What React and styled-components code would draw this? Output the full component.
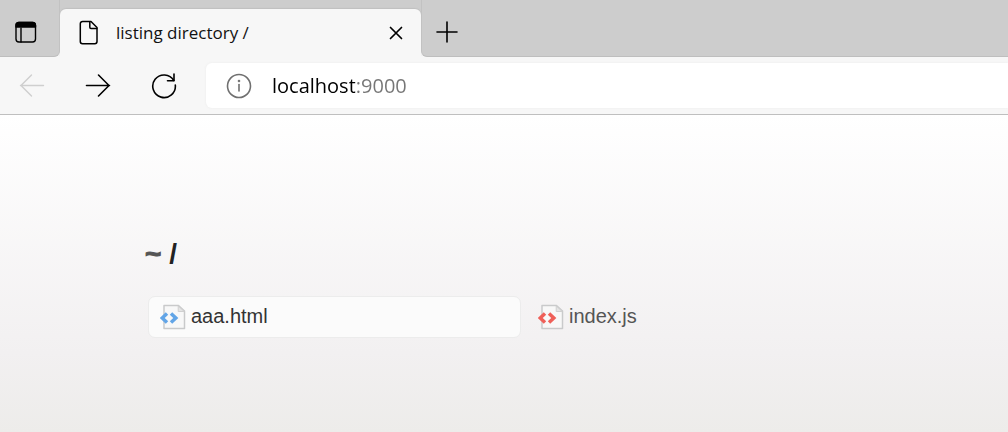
import React from "react";
import styled, { createGlobalStyle } from "styled-components";

const GlobalStyle = createGlobalStyle`
  * { box-sizing: border-box; }
  html, body, #root { height: 100%; }
  body { margin: 0; background: #f7f7f7; }
`;

const Window = styled.div`
  display: flex;
  flex-direction: column;
  min-height: 100%;
  overflow: hidden;
  font-family: "Segoe UI", "Open Sans", "Noto Sans", sans-serif;
`;

const TabStrip = styled.header`
  display: flex;
  height: 57px;
  background: #f7f7f7;
`;

const StripEnd = styled.div`
  display: flex;
  align-items: center;
  background: #cdcdcd;
  border-bottom: 1px solid #bebebe;
`;

const StripStart = styled(StripEnd)`
  width: 60px;
  padding: 8px 0 0 10px;
  border-right: 1px solid #c2c2c2;
  border-radius: 0 0 6px 0;
`;

const StripRest = styled(StripEnd)`
  flex: 1;
  padding: 7px 0 0 9px;
  border-left: 1px solid #c2c2c2;
  border-radius: 0 0 0 6px;
`;

const TabSlot = styled.div`
  flex: 0 1 361px;
  padding-top: 9px;
  background: linear-gradient(#cdcdcd 20px, #f7f7f7 20px);
`;

const Tab = styled.div`
  display: flex;
  align-items: center;
  height: 48px;
  padding: 0 9px 0 16px;
  border-radius: 6px 6px 0 0;
  background: #f7f7f7;
  box-shadow: 0 -1px 1px #c0c0c0;
`;

const TabTitle = styled.span`
  flex: 1;
  margin-left: 14px;
  font-size: 17px;
  line-height: 24px;
  color: #111;
  white-space: nowrap;
`;

const IconButton = styled.button`
  display: flex;
  align-items: center;
  justify-content: center;
  width: 32px;
  height: 32px;
  padding: 0;
  border: 0;
  background: none;
  color: #000;
  &:disabled { color: #cfcfcf; }
`;

const Toolbar = styled.nav`
  display: flex;
  align-items: center;
  height: 58px;
  padding-left: 16px;
  border-bottom: 1px solid #bfbfbf;
  background: #f7f7f7;
`;

const NavButtons = styled.div`
  display: flex;
  gap: 34px;
  margin-right: 26px;
`;

const AddressBar = styled.div`
  display: flex;
  flex: 1;
  align-items: center;
  height: 45px;
  padding-left: 20px;
  border-radius: 6px 0 0 6px;
  background: #fff;
  box-shadow: 0 0 3px #ececec;
`;

/* The host is black and the port grey: the text is filled by a two-colour background. */
const Address = styled.input`
  flex: 1;
  min-width: 0;
  margin-left: 20px;
  padding: 0;
  border: 0;
  outline: none;
  background: linear-gradient(to right, #000 83px, #767676 83px);
  background-clip: text;
  -webkit-background-clip: text;
  color: transparent;
  caret-color: #000;
  font-family: inherit;
  font-size: 20px;
  line-height: 28px;
`;

const Page = styled.main`
  flex: 1;
  padding: 121px 0 0 145px;
  background: linear-gradient(#fff, #f2f0f1 75%, #edecea);
  font-family: "Liberation Sans", Arial, sans-serif;
`;

const Heading = styled.h1`
  margin: 0;
  font-size: 28px;
  line-height: 36px;
  color: #222;
`;

const HomeLink = styled.a`
  color: #555;
  text-decoration: none;
  -webkit-text-stroke: 1px #555;
`;

const RootLink = styled.a`
  color: #222;
  text-decoration: none;
`;

const FileList = styled.ul`
  display: grid;
  grid-template-columns: repeat(auto-fill, 373px);
  gap: 5px;
  margin: 24px 0 0;
  padding: 0 0 0 3px;
  list-style: none;
`;

const FileLink = styled.a`
  display: flex;
  align-items: center;
  gap: 5px;
  height: 42px;
  padding-left: 11px;
  border: 1px solid ${(p) => (p.$active ? "#ececec" : "transparent")};
  border-radius: 7px;
  background: ${(p) => (p.$active ? "#fbfbfb" : "transparent")};
  color: ${(p) => (p.$active ? "#333" : "#555")};
  font-size: 20px;
  line-height: 24px;
  text-decoration: none;
`;

const FileName = styled.span`
  padding-bottom: 2px;
`;

const Icon = ({ size = 26, width = 2, children }) => (
  <svg width={size} height={size} viewBox={`0 0 ${size} ${size}`} fill="none"
    stroke="currentColor" strokeWidth={width} strokeLinecap="round" strokeLinejoin="round" aria-hidden="true">
    {children}
  </svg>
);

const PanelIcon = () => (
  <Icon size={24} width={1.4}>
    <rect x="2" y="2.5" width="19.5" height="19.5" rx="3" />
    <path d="M2 7V5.5a3 3 0 0 1 3-3h13.5a3 3 0 0 1 3 3V7z" fill="currentColor" />
    <path d="M7 8v14" />
  </Icon>
);

const PageIcon = () => (
  <Icon width={1.5}>
    <path d="M6.500 1.500h8.500l6 6V21.500a2.200 2.200 0 0 1-2.200 2.200H6.500a2.200 2.200 0 0 1-2.200-2.200V3.700a2.200 2.200 0 0 1 2.200-2.200z" />
    <path d="M13.800 1.800v5.500a1.200 1.200 0 0 0 1.200 1.200h5.800" />
  </Icon>
);

const FileIcon = ({ tint }) => (
  <svg width="26" height="26" viewBox="0 0 26 26" fill="none" aria-hidden="true">
    <path d="M4 1.500h14.500L24.500 7v17.500H4z" fill="#f8f8f8" stroke="#c9cacb" strokeWidth="1.500" strokeLinejoin="round" />
    <path d="M18.200 2v5.500h6z" fill="#e4e4e4" stroke="#d0d0d0" />
    <path d="M7 9.500L2.200 14l4.800 4.500M11 9.500L15.800 14l-4.800 4.500" stroke={tint} strokeWidth="3.500" />
  </svg>
);

const files = [
  { name: "aaa.html", tint: "#62a5e7", active: true },
  { name: "index.js", tint: "#ef6059", active: false },
];

export default function App() {
  return (
    <Window>
      <GlobalStyle />
      <TabStrip>
        <StripStart>
          <IconButton aria-label="Tab actions"><PanelIcon /></IconButton>
        </StripStart>
        <TabSlot>
          <Tab>
            <PageIcon />
            <TabTitle>listing directory /</TabTitle>
            <IconButton aria-label="Close tab">
              <Icon size={14} width={1.7}><path d="M1.500 1.500l11 11M12.500 1.500l-11 11" /></Icon>
            </IconButton>
          </Tab>
        </TabSlot>
        <StripRest>
          <IconButton aria-label="New tab">
            <Icon size={22} width={1.6}><path d="M11 1v20M1 11h20" /></Icon>
          </IconButton>
        </StripRest>
      </TabStrip>
      <Toolbar>
        <NavButtons>
          <IconButton aria-label="Back" disabled>
            <Icon width={1.4}><path d="M24.500 12.500h-23M12.500 2L2 12.500 12.500 23" /></Icon>
          </IconButton>
          <IconButton aria-label="Forward">
            <Icon width={1.6}><path d="M1.500 12.500h23M13.500 2L24 12.500 13.500 23" /></Icon>
          </IconButton>
          <IconButton aria-label="Refresh">
            <Icon width={1.6}>
              <path d="M24.300 12a11.300 11.300 0 1 1-1.500-4.500" />
              <path d="M23 1v6.800h-6.500" />
            </Icon>
          </IconButton>
        </NavButtons>
        <AddressBar>
          <Icon width={1.6}>
            <g stroke="#707070">
              <circle cx="13" cy="13" r="11.500" />
              <path d="M13 11.500v6.500" />
              <circle cx="13" cy="8" r="0.500" />
            </g>
          </Icon>
          <Address type="text" aria-label="Address" defaultValue="localhost:9000" spellCheck={false} />
        </AddressBar>
      </Toolbar>
      <Page>
        <Heading>
          <HomeLink href="#home">~</HomeLink> <RootLink href="#root">/</RootLink>
        </Heading>
        <FileList>
          {files.map((f) => (
            <li key={f.name}>
              <FileLink href={`#${f.name}`} $active={f.active}>
                <FileIcon tint={f.tint} />
                <FileName>{f.name}</FileName>
              </FileLink>
            </li>
          ))}
        </FileList>
      </Page>
    </Window>
  );
}
